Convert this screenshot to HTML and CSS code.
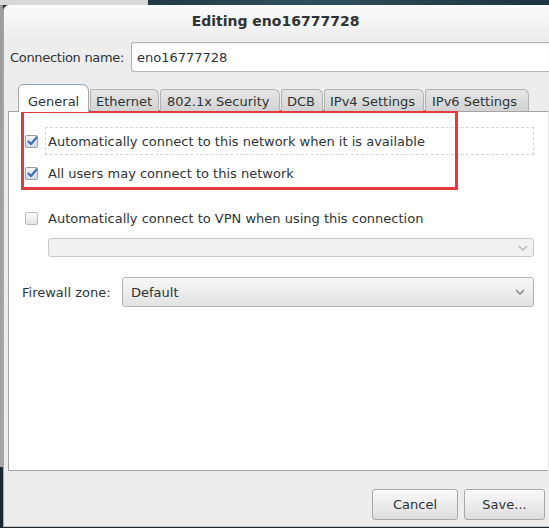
FILE: index.html
```html
<!DOCTYPE html>
<html lang="en">
<head>
  <meta charset="UTF-8" />
  <title>Editing eno16777728</title>
  <link rel="stylesheet" href="styles.css">
</head>
<body>
  <div class="desk-top">
    <span class="desk-top-left"></span>
    <span class="desk-top-right"></span>
  </div>
  <div class="screen">
    <div class="desk-left"></div>
    <div class="dialog">
      <div class="titlebar">Editing eno16777728</div>

      <div class="name-row">
        <span class="label">Connection name:</span>
        <div class="entry">eno16777728</div>
      </div>

      <div class="tabs">
        <span class="tab active">General</span>
        <span class="tab t-eth">Ethernet</span>
        <span class="tab t-sec">802.1x Security</span>
        <span class="tab t-dcb">DCB</span>
        <span class="tab t-ip4">IPv4 Settings</span>
        <span class="tab t-ip6">IPv6 Settings</span>
      </div>

      <div class="page">
        <div class="check-row">
          <span class="check on">
            <svg width="12" height="12" viewBox="0 0 12 12"><path d="M2.5 6.5 L5 9 L10.5 2.5" fill="none" stroke="#3f6fb5" stroke-width="2.2" stroke-linecap="round" stroke-linejoin="round"/></svg>
          </span>
          <span class="check-label focus">Automatically connect to this network when it is available</span>
        </div>
        <div class="check-row">
          <span class="check on">
            <svg width="12" height="12" viewBox="0 0 12 12"><path d="M2.5 6.5 L5 9 L10.5 2.5" fill="none" stroke="#3f6fb5" stroke-width="2.2" stroke-linecap="round" stroke-linejoin="round"/></svg>
          </span>
          <span class="check-label">All users may connect to this network</span>
        </div>
        <div class="check-row vpn">
          <span class="check"></span>
          <span class="check-label">Automatically connect to VPN when using this connection</span>
        </div>
        <div class="combo small disabled">
          <span></span>
          <svg width="10" height="6" viewBox="0 0 10 6"><path d="M1 1 L5 5 L9 1" fill="none" stroke="#b8b8b8" stroke-width="1.5"/></svg>
        </div>
        <div class="zone-row">
          <span class="label">Firewall zone:</span>
          <div class="combo">
            <span>Default</span>
            <svg width="10" height="6" viewBox="0 0 10 6"><path d="M1 1 L5 5 L9 1" fill="none" stroke="#8a8a8a" stroke-width="1.6"/></svg>
          </div>
        </div>
      </div>

      <div class="actions">
        <button class="btn cancel">Cancel</button>
        <button class="btn save">Save...</button>
      </div>
    </div>
  </div>

  <div class="annotation"></div>
</body>
</html>
```

FILE: styles.css
```css
body {
  margin: 0;
  font-family: 'DejaVu Sans', 'Open Sans', sans-serif;
  font-size: 13px;
  color: #2e3436;
  background: #1c2a31;
  overflow: hidden;
  width: 549px;
  height: 528px;
  position: relative;
}
.desk-top {
  display: flex;
  height: 5px;
}
.desk-top-left {
  width: 148px;
  background: #d8d8d8;
}
.desk-top-right {
  flex: 1;
  background: linear-gradient(to right, #223a46, #2f4f5c 40%, #1e3440);
}
.screen {
  display: flex;
  height: 523px;
}
.desk-left {
  width: 3px;
  flex: none;
  background: linear-gradient(to bottom, #9c9c9c 0, #a5a5a5 462px, #1a2830 462px);
}
.dialog {
  flex: 1;
  display: flex;
  flex-direction: column;
  background: #ededed;
  border-left: 1px solid #a9a9a9;
  border-top-left-radius: 6px;
  height: 521px;
  border-bottom: 1px solid #c4c4c4;
}
.titlebar {
  height: 32px;
  line-height: 32px;
  text-align: center;
  font-weight: bold;
  font-size: 14px;
  padding-right: 2px;
  background: linear-gradient(to bottom, #fbfbfb, #eeeeee);
  border-top-left-radius: 6px;
}
.name-row {
  display: flex;
  align-items: center;
  margin-top: 5px;
  padding-left: 6px;
  height: 30px;
}
.name-row .label {
  width: 121px;
  padding-top: 1px;
  letter-spacing: -0.3px;
}
.entry {
  flex: 1;
  height: 28px;
  line-height: 30px;
  padding-left: 5px;
  background: #fff;
  border: 1px solid #b4b4b4;
  border-right: none;
  border-radius: 3px 0 0 3px;
  box-shadow: inset 0 1px 2px rgba(0, 0, 0, 0.08);
}
.tabs {
  display: flex;
  align-items: flex-end;
  margin-top: 12px;
  padding-left: 14px;
  height: 27px;
  position: relative;
  z-index: 1;
}
.tab {
  box-sizing: border-box;
  height: 22px;
  line-height: 23px;
  padding-left: 5px;
  margin-right: 1px;
  white-space: nowrap;
  background: linear-gradient(to bottom, #e6e6e6, #d2d2d2);
  border: 1px solid #b2b2b2;
  border-bottom: none;
  border-radius: 3px 6px 0 0;
  color: #2e3436;
}
.t-eth { width: 69px; }
.t-sec { width: 120px; padding-left: 6px; }
.t-dcb { width: 42px; }
.t-ip4 { width: 100px; }
.t-ip6 { width: 104px; padding-left: 6px; }
.tab.active {
  width: 71px;
  height: 28px;
  line-height: 33px;
  padding-left: 9px;
  background: #fff;
  border-color: #8fa6c2 #a7a7a7 transparent #a7a7a7;
  border-radius: 5px 7px 0 0;
  margin-bottom: -1px;
}
.page {
  margin-left: 4px;
  margin-right: 1px;
  height: 360px;
  box-sizing: border-box;
  background: #fff;
  border: 1px solid #a3a3a3;
  border-right: none;
  padding: 15px 14px 0 13px;
}
.check-row {
  display: flex;
  align-items: center;
  height: 28px;
}
.check-row + .check-row {
  margin-top: 4px;
}
.check-row.vpn {
  margin-top: 17px;
}
.check {
  width: 11px;
  height: 11px;
  margin-left: 3px;
  margin-right: 7px;
  border: 1px solid #b9b9b9;
  border-radius: 2px;
  background: linear-gradient(to bottom, #ffffff, #e4e4e4);
  position: relative;
}
.check.on {
  border-color: #a0a0a0;
  background: linear-gradient(to bottom, #f4f6fa, #d3dbe8);
}
.check svg {
  position: absolute;
  left: 0;
  top: -1px;
}
.check-label {
  padding: 0 3px;
  height: 28px;
  line-height: 30px;
  box-sizing: border-box;
}
.check-label.focus {
  flex: 1;
  border: 1px dashed #d6d6d6;
  line-height: 28px;
  padding-left: 2px;
}
.combo {
  flex: 1;
  display: flex;
  align-items: center;
  justify-content: space-between;
  height: 30px;
  padding: 0 8px 0 8px;
  box-sizing: border-box;
  border: 1px solid #b3b3b3;
  border-radius: 3px;
  background: linear-gradient(to bottom, #f7f7f7, #e2e2e2);
}
.combo.small {
  height: 19px;
  margin: 6px 0 0 26px;
  padding-right: 5px;
  border-color: #c8c8c8;
  background: #f1f1f1;
}
.zone-row {
  display: flex;
  align-items: center;
  margin-top: 20px;
}
.zone-row .label {
  width: 100px;
}
.actions {
  display: flex;
  justify-content: flex-end;
  gap: 6px;
  padding: 18px 4px 0 0;
  flex: 1;
}
.btn {
  font: inherit;
  color: #2e3436;
  height: 31px;
  border: 1px solid #a8a8a8;
  border-radius: 3px;
  background: linear-gradient(to bottom, #fafafa, #dedede);
  box-shadow: inset 0 1px 0 #fff;
  cursor: pointer;
}
.btn.cancel { width: 86px; }
.btn.save { width: 81px; }
.annotation {
  position: absolute;
  left: 21px;
  top: 110px;
  width: 431px;
  height: 74px;
  border: 3px solid #e23a3f;
  pointer-events: none;
}
```
